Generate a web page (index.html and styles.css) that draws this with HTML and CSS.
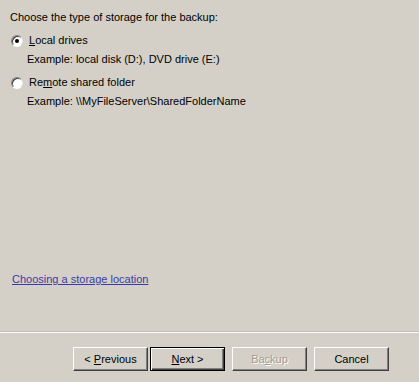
FILE: index.html
```html
<!DOCTYPE html>
<html lang="en">
<head>
  <meta charset="UTF-8">
  <title>Backup Once Wizard</title>
  <link rel="stylesheet" href="styles.css">
</head>
<body>

  <div class="wizard-page">
    <p class="intro">Choose the type of storage for the backup:</p>

    <div class="option">
      <label class="option-row">
        <span class="radio checked"></span>
        <span><u>L</u>ocal drives</span>
      </label>
      <div class="example">Example: local disk (D:), DVD drive (E:)</div>
    </div>

    <div class="option">
      <label class="option-row">
        <span class="radio"></span>
        <span>Re<u>m</u>ote shared folder</span>
      </label>
      <div class="example">Example: \\MyFileServer\SharedFolderName</div>
    </div>

    <a class="help-link" href="#">Choosing a storage location</a>
  </div>

  <div class="separator"></div>

  <div class="buttons">
    <div class="nav-pair">
      <button class="btn">&lt; <u>P</u>revious</button>
      <button class="btn default"><u>N</u>ext &gt;</button>
    </div>
    <button class="btn" disabled>Ba<u>c</u>kup</button>
    <button class="btn">Cancel</button>
  </div>

</body>
</html>
```

FILE: styles.css
```css
body {
  margin: 0;
  padding: 0;
  background: #d4d0c8;
  font-family: 'Liberation Sans', Arial, sans-serif;
  font-size: 11px;
  line-height: 13px;
  color: #000;
  width: 419px;
  height: 382px;
  overflow: hidden;
}

.wizard-page {
  height: 331px;
  box-sizing: border-box;
  padding: 11px 10px 45px 10px;
  display: flex;
  flex-direction: column;
}

.intro {
  margin: 0 0 10px 0;
}

.option {
  display: flex;
  flex-direction: column;
  gap: 6px;
  margin-bottom: 10px;
}

.option-row {
  display: flex;
  align-items: center;
  gap: 6px;
}

.radio {
  width: 12px;
  height: 12px;
  box-sizing: border-box;
  border-radius: 50%;
  background: #fff;
  border: 1px solid;
  border-color: #808080 #e8e8e8 #fff #808080;
  box-shadow: inset 1px 1px 0 #404040;
  position: relative;
  margin-left: 1px;
}

.radio.checked::after {
  content: "";
  position: absolute;
  left: 3px;
  top: 3px;
  width: 4px;
  height: 4px;
  border-radius: 50%;
  background: #000;
}

.example {
  padding-left: 17px;
}

.help-link {
  margin-top: auto;
  margin-left: 2px;
  color: #3a3aa8;
  text-decoration: underline;
  align-self: flex-start;
}

.separator {
  height: 1px;
  background: #c4c0b8;
  border-bottom: 1px solid #fbfaf6;
}

.buttons {
  display: flex;
  justify-content: flex-end;
  gap: 7px;
  padding: 14px 30px 0 0;
}

.nav-pair {
  display: flex;
  gap: 2px;
}

.btn {
  width: 75px;
  height: 24px;
  box-sizing: border-box;
  margin: 0;
  padding: 0;
  font-family: 'Liberation Sans', Arial, sans-serif;
  font-size: 11px;
  color: #000;
  background: #d4d0c8;
  border: 1px solid;
  border-color: #fff #404040 #404040 #fff;
  box-shadow: inset -1px -1px 0 #808080;
  border-radius: 0;
}

.btn.default {
  border-color: #000;
  box-shadow: inset 1px 1px 0 #fff, inset -1px -1px 0 #404040, inset -2px -2px 0 #808080;
}

.btn:disabled {
  color: #a09c94;
  text-shadow: 1px 1px 0 #fff;
}
```
